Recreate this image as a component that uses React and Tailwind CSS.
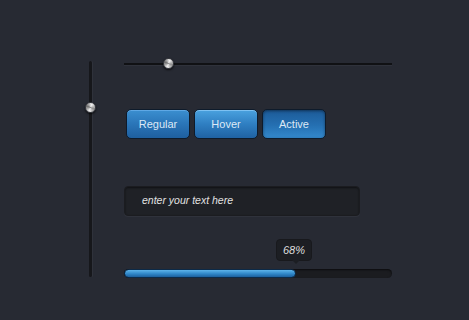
import React from "react";

const Knob = ({ className }) => (
  <div
    className={
      "absolute w-[11px] h-[11px] rounded-full border border-[#3a3c42] shadow-[0_1px_2px_rgba(0,0,0,0.7)] bg-[conic-gradient(from_20deg,#f4f4f4,#8d8d8d,#f0f0f0,#6f6f6f,#f4f4f4)] " +
      className
    }
  />
);

const Btn = ({ label, variant }) => {
  const styles = {
    regular:
      "bg-[linear-gradient(#3b8fd0,#2a75b8_50%,#1e5f9f)] shadow-[inset_0_1px_0_rgba(140,200,255,0.45)]",
    hover:
      "bg-[linear-gradient(#4aa2df,#2f7fc2_50%,#1f62a3)] shadow-[inset_0_1px_0_rgba(160,215,255,0.6)]",
    active:
      "bg-[linear-gradient(#1c5a98,#2570b2_55%,#3388cc)] shadow-[inset_0_1px_3px_rgba(0,0,0,0.45)]",
  };
  return (
    <div
      className={
        "w-[64px] h-[30px] rounded-[5px] border border-[#0e1b2b] flex items-center justify-center text-[11px] text-[#dce9f6] " +
        styles[variant]
      }
    >
      {label}
    </div>
  );
};

export default function App() {
  return (
    <div
      className="w-[469px] h-[320px] bg-[#272a33] flex overflow-hidden"
      style={{ fontFamily: '"Liberation Sans", Arial, sans-serif' }}
    >
      <div className="ml-[89px] mt-[61px] relative w-[3px] h-[216px] bg-[#16171b] rounded-full shadow-[1px_0_0_rgba(255,255,255,0.04)]">
        <Knob className="left-[-4px] top-[41px]" />
      </div>

      <div className="ml-[32px] mt-[58px] w-[268px] flex flex-col">
        <div className="relative h-[12px] flex items-center">
          <div className="w-full h-[2px] bg-[#101114] shadow-[0_1px_0_rgba(255,255,255,0.04)]" />
          <Knob className="left-[39px] top-[0px]" />
        </div>

        <div className="mt-[39px] flex gap-[4px] pl-[2px]">
          <Btn label="Regular" variant="regular" />
          <Btn label="Hover" variant="hover" />
          <Btn label="Active" variant="active" />
        </div>

        <div className="mt-[47px] w-[236px] h-[30px] rounded-[4px] bg-[#1f2126] border border-[#1b1c20] shadow-[inset_0_1px_2px_rgba(0,0,0,0.5),0_1px_0_rgba(255,255,255,0.04)] flex items-center pl-[17px]">
          <span className="italic text-[10.5px] text-[#e2e2e2]">enter your text here</span>
        </div>

        <div className="mt-[23px] ml-[152px] relative w-[36px] h-[22px] rounded-[4px] bg-[#1c1e23] border border-[#18191d] flex items-center justify-center">
          <span className="italic text-[11px] text-[#dedede]">68%</span>
          <div className="absolute left-[15px] bottom-[-4px] w-0 h-0 border-l-[4px] border-r-[4px] border-t-[4px] border-l-transparent border-r-transparent border-t-[#1c1e23]" />
        </div>

        <div className="mt-[8px] w-[268px] h-[9px] rounded-full bg-[#1b1c20] shadow-[inset_0_1px_2px_rgba(0,0,0,0.6)]">
          <div className="w-[172px] h-full rounded-full border border-[#0c2a48] bg-[linear-gradient(#5db4ea,#2f86c8_55%,#1c5f9c)]" />
        </div>
      </div>
    </div>
  );
}
